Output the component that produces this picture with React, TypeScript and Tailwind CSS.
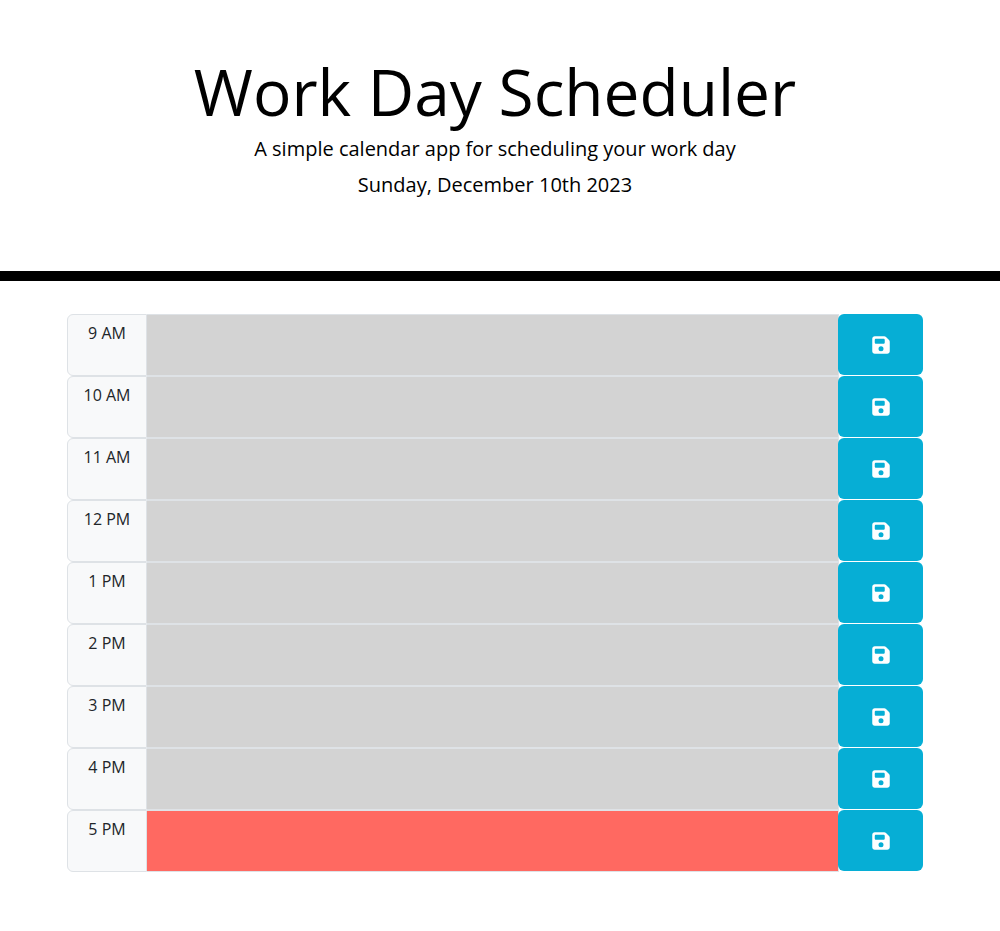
import { FaFloppyDisk } from "react-icons/fa6";

const hours = ["9 AM", "10 AM", "11 AM", "12 PM", "1 PM", "2 PM", "3 PM", "4 PM", "5 PM"];
const currentHour = "5 PM";

function TimeBlock({ hour }: { hour: string }) {
  const slot = hour === currentHour ? "bg-[#ff6961]" : "bg-[#d3d3d3]";
  return (
    <div className="flex h-[62px]">
      <div className="flex w-20 justify-center rounded-l-md border border-[#dee2e6] bg-[#f8f9fa] pt-1.5 text-[#212529]">
        {hour}
      </div>
      <div className={`-mr-px flex-1 border-y border-r border-[#dee2e6] ${slot}`} />
      <button className="z-10 flex h-[61px] w-[85px] items-center justify-center rounded-md bg-[#06aed5] text-white" aria-label="Save">
        <FaFloppyDisk size={20} />
      </button>
    </div>
  );
}

export default function App() {
  return (
    <div className="min-h-[931px] bg-white font-['Open_Sans',sans-serif] text-[16px] leading-6 font-normal text-black">
      <header className="h-[281px] border-b-[10px] border-black pr-[10px] pt-[53px] text-center">
        <h1 className="text-[64px] leading-[77px] font-normal">Work Day Scheduler</h1>
        <p className="mt-1 text-[20px] leading-[30px] font-normal">A simple calendar app for scheduling your work day</p>
        <p className="mt-1.5 text-[20px] leading-[30px] font-normal">Sunday, December 10th 2023</p>
      </header>
      <main className="pl-[67px] pr-[77px] pt-[33px]">
        {hours.map((hour) => (
          <TimeBlock key={hour} hour={hour} />
        ))}
      </main>
    </div>
  );
}
